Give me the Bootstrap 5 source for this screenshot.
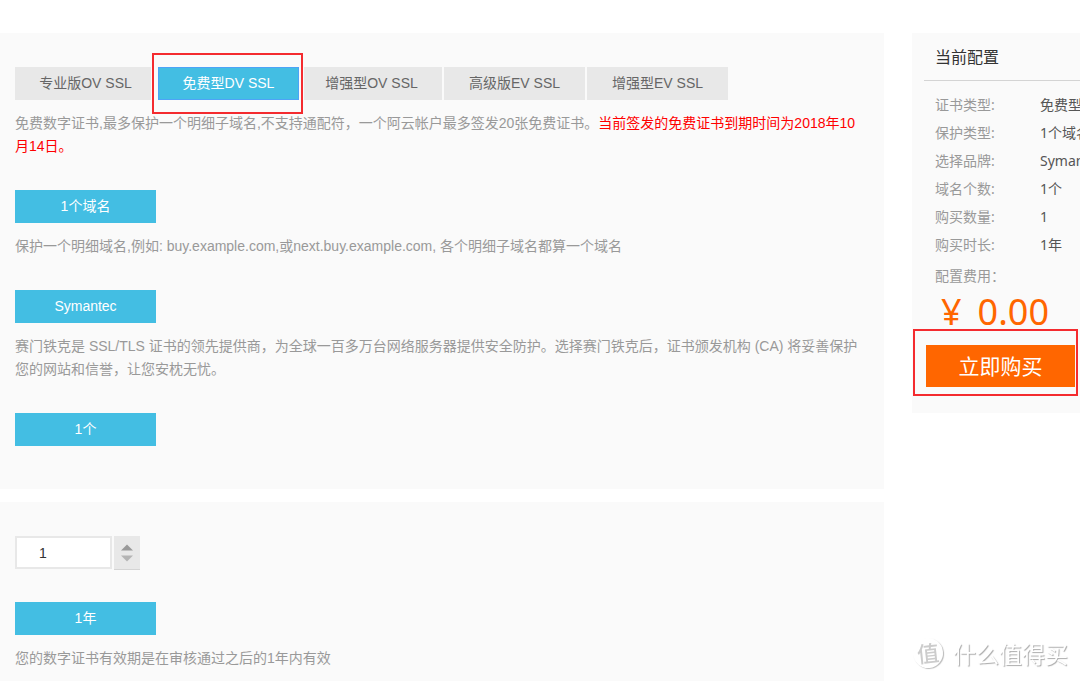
<!DOCTYPE html>
<html lang="zh-CN">
<head>
<meta charset="utf-8">
<meta name="viewport" content="width=device-width, initial-scale=1">
<title>SSL 证书购买</title>
<link href="https://cdn.jsdelivr.net/npm/bootstrap@5.3.0/dist/css/bootstrap.min.css" rel="stylesheet">
<style>
  body { font-family: "Liberation Sans", "Noto Sans CJK SC", sans-serif; font-size: 14px; line-height: 23px; color: #999; background: #fff; overflow-x: hidden; }
  .page { padding-top: 33px; gap: 28px; min-height: 100vh; }
  .panel { background: #fafafa; padding: 34px 16px 12px 15px; }
  .panel-plan { padding-bottom: 43px; }
  .field + .field { margin-top: 32px; }
  .field p { margin: 12px 0 0; }
  .stack { gap: 13px; }
  .options { gap: 2px; }
  .opt { width: 141px; height: 33px; padding: 0; border: 0; border-radius: 0; font-size: 14px; line-height: 33px; color: #666; background: #e8e8e8; }
  .opt:hover { background: #e0e0e0; color: #666; }
  .opt.active { background: #43bee3; color: #fff; }
  .marked { isolation: isolate; }
  .marked::before { content: ""; position: absolute; z-index: -1; border: 2px solid #f42b2f; background: #fafafa; box-shadow: 0 0 0 1px #fafafa; }
  .marked-tab::before { inset: -14px -4px -14px -6px; }
  .marked-tab .opt { outline: 1px solid #4da3f7; outline-offset: -1px; }
  .marked-buy::before { inset: -16px -3px -9px -13px; }
  .notice { color: #f00; }
  .qty { width: 97px; height: 33px; border: 2px solid #e8e8e8; border-radius: 0; padding: 0 22px; font-size: 14px; color: #333; }
  .stepper { width: 26px; height: 34px; background: #e8e8e8; border-bottom: 1px solid #d4d4d4; gap: 4px; }
  .step { border: 0; background: none; padding: 0; line-height: 0; color: #999; }
  .step.down { color: #b4b4b4; }
  .side { width: 168px; flex: none; font-family: "Noto Sans", "Noto Sans CJK SC", sans-serif; }
  .side-box { background: #fafafa; padding: 0 0 26px 12px; overflow: hidden; }
  .side h2 { font-size: 16px; font-weight: 400; line-height: 45px; color: #333; margin: 0 0 10px; padding: 2px 0 0 11px; border-bottom: 1px solid #d4d4d4; }
  .conf { padding-left: 11px; line-height: 28px; }
  .conf dt { width: 105px; flex: none; font-weight: 400; }
  .conf dd { margin: 0; white-space: nowrap; color: #555; }
  .fee { padding-top: 3px; }
  .price { font-size: 36px; line-height: 38px; color: #f60; padding: 3px 0 0 17px; gap: 16px; }
  .buy { height: 42px; border: 0; border-radius: 0; background: #f60; color: #fff; font-size: 21px; line-height: 42px; padding: 0; }
  .buy:hover { background: #e65c00; color: #fff; }
  .buy-wrap { margin: 14px 5px 0 2px; }
  .brand { right: 12px; bottom: 11px; gap: 10px; font-family: "Noto Sans CJK SC", sans-serif; font-size: 23px; line-height: 34px; color: #fff; text-shadow: 1px 1px 1px #aaa; }
  .brand-ring { width: 30px; height: 30px; border-radius: 50%; line-height: 28px; box-shadow: 1px 1px 1px #bbb; font-size: 22px; font-weight: 500; color: #ccc; text-shadow: none; transform: rotate(-6deg); }
</style>
</head>
<body>
<div class="page d-flex align-items-start">
  <main class="stack flex-grow-1 d-flex flex-column">
    <section class="panel panel-plan">
      <div class="field">
        <div class="options d-flex flex-wrap" role="group" aria-label="证书类型">
          <button type="button" class="btn opt">专业版OV SSL</button>
          <div class="marked marked-tab position-relative"><button type="button" class="btn opt active" aria-pressed="true">免费型DV SSL</button></div>
          <button type="button" class="btn opt">增强型OV SSL</button>
          <button type="button" class="btn opt">高级版EV SSL</button>
          <button type="button" class="btn opt">增强型EV SSL</button>
        </div>
        <p>免费数字证书,最多保护一个明细子域名,不支持通配符，一个阿云帐户最多签发20张免费证书。<span class="notice">当前签发的免费证书到期时间为2018年10月14日。</span></p>
      </div>
      <div class="field">
        <button type="button" class="btn opt active d-block">1个域名</button>
        <p>保护一个明细域名,例如: buy.example.com,或next.buy.example.com, 各个明细子域名都算一个域名</p>
      </div>
      <div class="field">
        <button type="button" class="btn opt active d-block">Symantec</button>
        <p>赛门铁克是 SSL/TLS 证书的领先提供商，为全球一百多万台网络服务器提供安全防护。选择赛门铁克后，证书颁发机构 (CA) 将妥善保护您的网站和信誉，让您安枕无忧。</p>
      </div>
      <div class="field">
        <button type="button" class="btn opt active d-block">1个</button>
      </div>
    </section>
    <section class="panel">
      <div class="field options d-flex">
        <input class="qty" type="text" inputmode="numeric" value="1" aria-label="购买数量">
        <div class="stepper d-flex flex-column align-items-center justify-content-center">
          <button type="button" class="step up" aria-label="增加"><svg width="12" height="7" viewBox="0 0 12 7" fill="currentColor"><path d="M6 0.5 12 6.5H0z"/></svg></button>
          <button type="button" class="step down" aria-label="减少"><svg width="12" height="7" viewBox="0 0 12 7" fill="currentColor"><path d="M6 6.5 0 0.5H12z"/></svg></button>
        </div>
      </div>
      <div class="field">
        <button type="button" class="btn opt active d-block">1年</button>
        <p>您的数字证书有效期是在审核通过之后的1年内有效</p>
      </div>
    </section>
  </main>
  <aside class="side">
    <div class="side-box">
      <h2>当前配置</h2>
      <dl class="conf mb-0">
        <div class="d-flex"><dt>证书类型:</dt><dd>免费型DV SSL</dd></div>
        <div class="d-flex"><dt>保护类型:</dt><dd>1个域名</dd></div>
        <div class="d-flex"><dt>选择品牌:</dt><dd>Symantec</dd></div>
        <div class="d-flex"><dt>域名个数:</dt><dd>1个</dd></div>
        <div class="d-flex"><dt>购买数量:</dt><dd>1</dd></div>
        <div class="d-flex"><dt>购买时长:</dt><dd>1年</dd></div>
      </dl>
      <div class="conf fee">配置费用：</div>
      <div class="price d-flex"><span>¥</span><span>0.00</span></div>
      <div class="buy-wrap marked marked-buy position-relative"><button type="button" class="btn buy d-block w-100">立即购买</button></div>
    </div>
  </aside>
</div>
<div class="brand position-fixed d-flex align-items-center"><span class="brand-ring text-center">值</span><span>什么值得买</span></div>
<script src="https://cdn.jsdelivr.net/npm/bootstrap@5.3.0/dist/js/bootstrap.bundle.min.js"></script>
</body>
</html>
